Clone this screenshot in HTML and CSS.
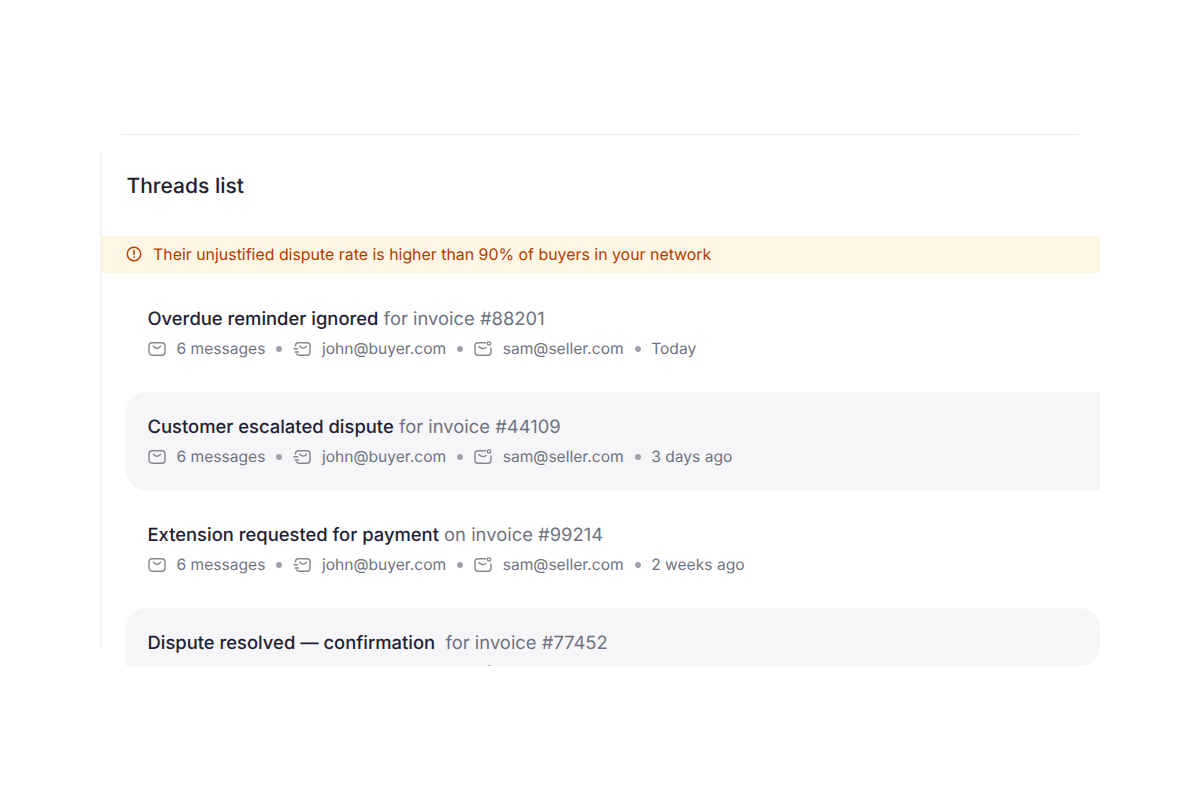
FILE: index.html
```html
<!DOCTYPE html>
<html lang="en">
<head>
  <meta charset="UTF-8" />
  <link rel="stylesheet" href="styles.css">
</head>
<body>
  <svg class="icon-defs" width="0" height="0">
    <defs>
      <symbol id="i-mail" viewBox="0 0 18 16">
        <rect x="1" y="1.8" width="16" height="12.4" rx="3.2" fill="none" stroke="currentColor" stroke-width="1.4"/>
        <path d="M5.5 5.2C6.700 6.600 7.800 7.300 9 7.300s2.300-.7 3.500-2.100" fill="none" stroke="currentColor" stroke-width="1.4" stroke-linecap="round"/>
      </symbol>
      <symbol id="i-sent" viewBox="0 0 18 16">
        <path d="M2.500 5V4.800a3 3 0 0 1 3-3H14a3 3 0 0 1 3 3v6.400a3 3 0 0 1-3 3H6a3 3 0 0 1-2.500-1.200" fill="none" stroke="currentColor" stroke-width="1.4" stroke-linecap="round"/>
        <path d="M1 7.800h3.500M2 11h3.500M6.500 5.200c1.300 1.200 2.500 1.900 3.700 1.900s2.300-.7 3.300-1.900" fill="none" stroke="currentColor" stroke-width="1.4" stroke-linecap="round"/>
      </symbol>
      <symbol id="i-recv" viewBox="0 0 18 16">
        <path d="M11.500 1.800H4a3 3 0 0 0-3 3v6.400a3 3 0 0 0 3 3h10a3 3 0 0 0 3-3V7" fill="none" stroke="currentColor" stroke-width="1.4" stroke-linecap="round"/>
        <path d="M4.800 5.600c1.400 1.400 2.800 2 4.200 2 1 0 2-.4 3-1.100" fill="none" stroke="currentColor" stroke-width="1.4" stroke-linecap="round"/>
        <circle cx="15" cy="2.500" r="1.700" fill="none" stroke="currentColor" stroke-width="1.3"/>
      </symbol>
    </defs>
  </svg>

  <div class="frame">
    <div class="top-rule"></div>
    <section class="panel">
      <h2 class="panel-title">Threads list</h2>

      <div class="alert">
        <svg class="alert-icon" viewBox="0 0 16 16">
          <circle cx="8" cy="8" r="6.7" fill="none" stroke="currentColor" stroke-width="1.4"/>
          <path d="M8 4.600v4" fill="none" stroke="currentColor" stroke-width="1.5" stroke-linecap="round"/>
          <circle cx="8" cy="11.100" r="0.85" fill="currentColor"/>
        </svg>
        <span>Their unjustified dispute rate is higher than 90% of buyers in your network</span>
      </div>

      <div class="threads">
        <div class="thread">
          <p class="thread-title"><strong>Overdue reminder ignored</strong> for invoice #88201</p>
          <div class="meta">
            <span class="meta-item"><svg class="meta-icon"><use href="#i-mail"/></svg>6 messages</span>
            <span class="meta-item"><svg class="meta-icon"><use href="#i-sent"/></svg>john@buyer.com</span>
            <span class="meta-item"><svg class="meta-icon"><use href="#i-recv"/></svg>sam@seller.com</span>
            <span class="meta-item">Today</span>
          </div>
        </div>
        <div class="thread shaded">
          <p class="thread-title"><strong>Customer escalated dispute</strong> for invoice #44109</p>
          <div class="meta">
            <span class="meta-item"><svg class="meta-icon"><use href="#i-mail"/></svg>6 messages</span>
            <span class="meta-item"><svg class="meta-icon"><use href="#i-sent"/></svg>john@buyer.com</span>
            <span class="meta-item"><svg class="meta-icon"><use href="#i-recv"/></svg>sam@seller.com</span>
            <span class="meta-item">3 days ago</span>
          </div>
        </div>
        <div class="thread">
          <p class="thread-title"><strong>Extension requested for payment</strong> on invoice #99214</p>
          <div class="meta">
            <span class="meta-item"><svg class="meta-icon"><use href="#i-mail"/></svg>6 messages</span>
            <span class="meta-item"><svg class="meta-icon"><use href="#i-sent"/></svg>john@buyer.com</span>
            <span class="meta-item"><svg class="meta-icon"><use href="#i-recv"/></svg>sam@seller.com</span>
            <span class="meta-item">2 weeks ago</span>
          </div>
        </div>
        <div class="thread shaded">
          <p class="thread-title"><strong>Dispute resolved — confirmation</strong>&nbsp; for invoice #77452</p>
          <div class="meta">
            <span class="meta-item"><svg class="meta-icon"><use href="#i-mail"/></svg>6 messages</span>
            <span class="meta-item"><svg class="meta-icon"><use href="#i-sent"/></svg>john@buyer.com</span>
            <span class="meta-item"><svg class="meta-icon"><use href="#i-recv"/></svg>sam@seller.com</span>
          </div>
        </div>
      </div>
    </section>
  </div>
</body>
</html>
```

FILE: styles.css
```css
*, *::before, *::after { box-sizing: border-box; }
body {
  margin: 0;
  height: 800px;
  overflow: hidden;
  background: #fff;
  font-family: "Inter", sans-serif;
  color: #1f2233;
  text-rendering: geometricPrecision;
}
.icon-defs { display: block; }

.frame {
  width: 1000px;
  margin-left: 100px;
  padding-top: 134px;
}
.top-rule {
  height: 1px;
  margin: 0 20px;
  background: linear-gradient(90deg, transparent 0, #e9ebed 3px, #e9ebed calc(100% - 3px), transparent 100%);
}

/* the list runs on past the bottom of the left rule */
.panel {
  height: 496px;
  margin-top: 17px;
  border-left: 2px solid #f1f2f4;
}
.panel-title {
  margin: 0;
  padding: 21px 0 0 24.5px;
  font-size: 21px;
  line-height: 28px;
  font-weight: 500;
}

.alert {
  display: flex;
  align-items: center;
  gap: 11px;
  height: 37px;
  margin: 35px 0 0 -1px;
  padding: 0 0 1px 25px;
  background: #fef6e4;
  color: #b23c00;
  font-size: 15.9px;
  font-weight: 400;
}
.alert-icon { width: 16px; height: 16px; }

.threads {
  height: 382px;
  margin: 11px 0 0 24px;
  overflow: hidden;
  border-radius: 0 0 20px 0;
}
.thread {
  height: 98px;
  margin-bottom: 10px;
  padding: 21px 21.5px;
  border-radius: 20px 0 0 20px;
}
.thread.shaded { background: #f6f6f9; }
.threads .thread:last-child { border-radius: 20px 20px 0 0; }

.thread-title {
  margin: 0;
  font-size: 18.4px;
  line-height: 28px;
  color: #6f7280;
}
.thread-title strong { font-weight: 500; color: #1f2233; }

.meta {
  display: flex;
  align-items: center;
  margin-top: 6px;
  font-size: 15.6px;
  line-height: 20px;
  color: #6f7280;
}
.meta-item { display: flex; align-items: center; }
.meta-item + .meta-item::before {
  content: "";
  width: 6px;
  height: 6px;
  margin: 0 10.5px 0 11px;
  border-radius: 50%;
  background: #a0a2ab;
}
.meta-icon {
  width: 18px;
  height: 16px;
  margin-right: 11px;
  color: #85878f;
}
```
